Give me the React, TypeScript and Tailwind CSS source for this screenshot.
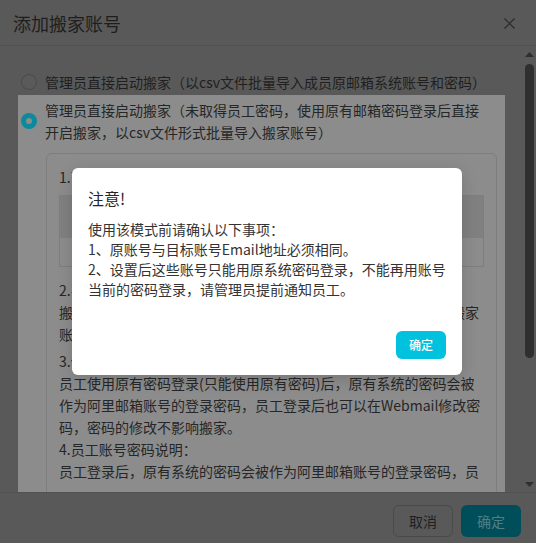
import React from 'react'

const font = '[font-family:"Noto_Sans_CJK_SC","Noto_Sans",sans-serif]'

const noticeLines = [
  '使用该模式前请确认以下事项：',
  '1、原账号与目标账号Email地址必须相同。',
  '2、设置后这些账号只能用原系统密码登录，不能再用账号',
  '当前的密码登录，请管理员提前通知员工。',
]

const stepLines = [
  '3.使用说明：',
  '员工使用原有密码登录(只能使用原有密码)后，原有系统的密码会被',
  '作为阿里邮箱账号的登录密码，员工登录后也可以在Webmail修改密',
  '码，密码的修改不影响搬家。',
  '4.员工账号密码说明：',
  '员工登录后，原有系统的密码会被作为阿里邮箱账号的登录密码，员',
]

function Radio({ checked }: { checked?: boolean }) {
  if (checked) {
    return (
      <span className="w-4 h-4 shrink-0 rounded-full bg-[#0a8a9c] flex items-center justify-center">
        <span className="w-[6px] h-[6px] rounded-full bg-[#8c8c8c]" />
      </span>
    )
  }
  return <span className="w-4 h-4 shrink-0 rounded-full border border-[#4a4a4a] bg-[#5a5a5a]" />
}

export default function App() {
  return (
    <div className={`w-[536px] h-[543px] relative overflow-hidden bg-[#595959] flex flex-col ${font}`}>
      {/* Header */}
      <header className="h-[46px] shrink-0 border-b border-[#515151] flex items-center justify-between pl-[13px] pr-[21px]">
        <span className="text-[18px] leading-[26px] text-[#1e1e1e]">添加搬家账号</span>
        <svg width="11" height="11" viewBox="0 0 11 11" className="mt-[1px]">
          <path d="M0.5 0.5 L10.5 10.5 M10.5 0.5 L0.5 10.5" stroke="#2a2a2a" strokeWidth="1.2" fill="none" />
        </svg>
      </header>

      {/* Body */}
      <div className="flex-1 min-h-0 flex">
        <div className="flex-1 min-w-0 pl-[18px] pr-[20px] pt-[25px] overflow-hidden text-[14px] leading-[22px]">
          <div className="flex items-center gap-2 pl-[3px] text-[#1f1f1f]">
            <Radio />
            <span className="whitespace-nowrap">管理员直接启动搬家（以csv文件批量导入成员原邮箱系统账号和密码）</span>
          </div>

          <div className="mt-[2px] bg-[#8c8c8c] pl-[3px] pr-[8px] pt-[4px] h-[400px] text-[#262626]">
            <div className="flex items-center gap-2">
              <Radio checked />
              <div className="whitespace-nowrap">
                <div>管理员直接启动搬家（未取得员工密码，使用原有邮箱密码登录后直接</div>
                <div>开启搬家，以csv文件形式批量导入搬家账号）</div>
              </div>
            </div>

            <div className="ml-[25px] mt-[10px] border border-[#7d7d7d] rounded-md px-3 pt-3 pb-4 whitespace-nowrap">
              <div>1.下载导入模板：</div>
              <div className="mt-[7px] border border-[#7e7e7e]">
                <div className="h-[42px] bg-[#808080]" />
                <div className="h-[28px]" />
              </div>
              <div className="mt-[12px]">2.导入搬家账号：</div>
              <div>搬家前请按照模板填写员工原邮箱账号，然后上传文件批量导入搬家</div>
              <div>账号。</div>
              <div className="mt-[5px]">
                {stepLines.map((l) => (
                  <div key={l}>{l}</div>
                ))}
              </div>
            </div>
          </div>
        </div>

        {/* Scrollbar */}
        <div className="w-[9px] mr-[2px] flex flex-col items-center pt-[6px] pb-[5px]">
          <svg width="9" height="5" viewBox="0 0 9 5">
            <path d="M4.5 0 L9 5 L0 5 Z" fill="#2f2f2f" />
          </svg>
          <div className="mt-[7px] w-[9px] h-[294px] rounded-full bg-[#2f2f2f]" />
          <div className="flex-1" />
          <svg width="9" height="5" viewBox="0 0 9 5">
            <path d="M0 0 L9 0 L4.5 5 Z" fill="#2f2f2f" />
          </svg>
        </div>
      </div>

      {/* Footer */}
      <footer className="h-[51px] shrink-0 border-t border-[#525252] flex justify-end items-start gap-2 pt-[12px] pr-[15px]">
        <button className="w-[60px] h-[32px] rounded-md border border-[#4a4a4a] text-[14px] text-[#1f1f1f]">取消</button>
        <button className="w-[60px] h-[32px] rounded-md bg-[#004e5a] text-[14px] text-[#4f7f86]">确定</button>
      </footer>

      {/* Notice modal */}
      <div className="absolute left-[72px] top-[168px] w-[390px] bg-white rounded-md shadow-[0_4px_16px_rgba(0,0,0,0.15)] px-4 pt-[18px] pb-4">
        <div className="text-[16px] leading-[24px] text-[#262626]">注意!</div>
        <div className="mt-[9px] text-[14px] leading-[20px] text-[#333333] whitespace-nowrap">
          {noticeLines.map((l) => (
            <div key={l}>{l}</div>
          ))}
        </div>
        <div className="mt-[32px] flex justify-end">
          <button className="w-[50px] h-[28px] rounded-md bg-[#00c1de] text-white text-[12px] font-medium">确定</button>
        </div>
      </div>
    </div>
  )
}
